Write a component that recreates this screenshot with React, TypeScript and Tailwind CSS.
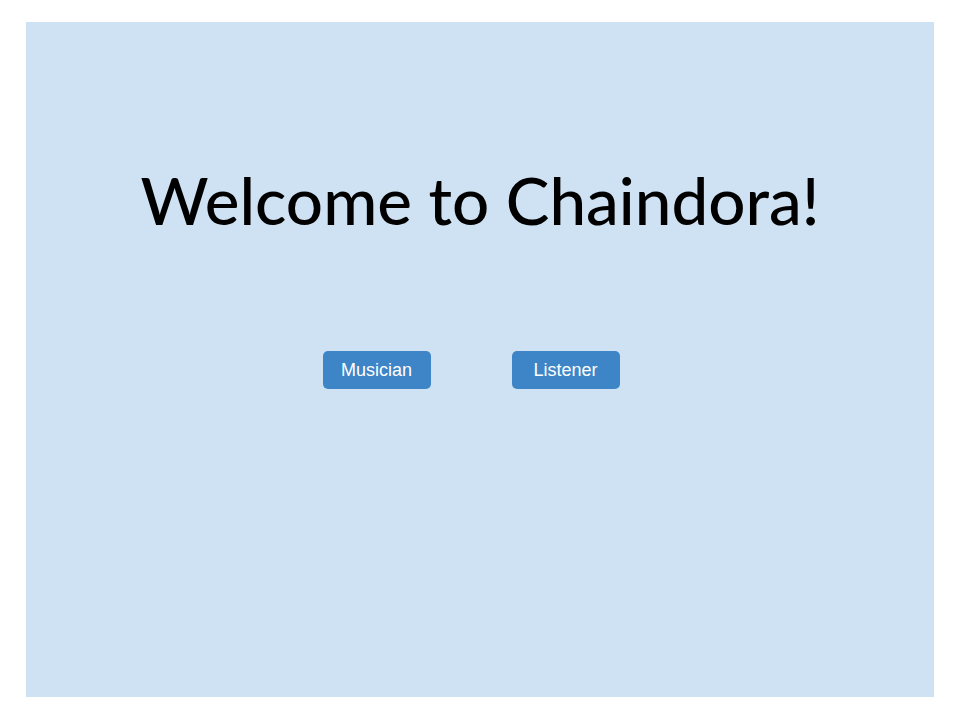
import React from "react";

const roles = ["Musician", "Listener"];

const App: React.FC = () => {
  return (
    <div className="w-[960px] h-[720px] bg-white px-[26px] pt-[22px] pb-[23px]">
      <div className="h-full bg-[#cfe2f3] flex flex-col items-center">
        <h1 className="mt-[145px] text-[65.5px] leading-none text-black font-['Lato',sans-serif] font-medium">
          Welcome to Chaindora!
        </h1>
        <div className="mt-[118.5px] flex justify-center gap-[81px] pr-[18px]">
          {roles.map((role) => (
            <button
              key={role}
              className="w-[108px] h-[38px] rounded-[5px] bg-[#3d85c6] text-white text-[18px] font-['Liberation_Sans',Arial,sans-serif]"
            >
              {role}
            </button>
          ))}
        </div>
      </div>
    </div>
  );
};

export default App;
